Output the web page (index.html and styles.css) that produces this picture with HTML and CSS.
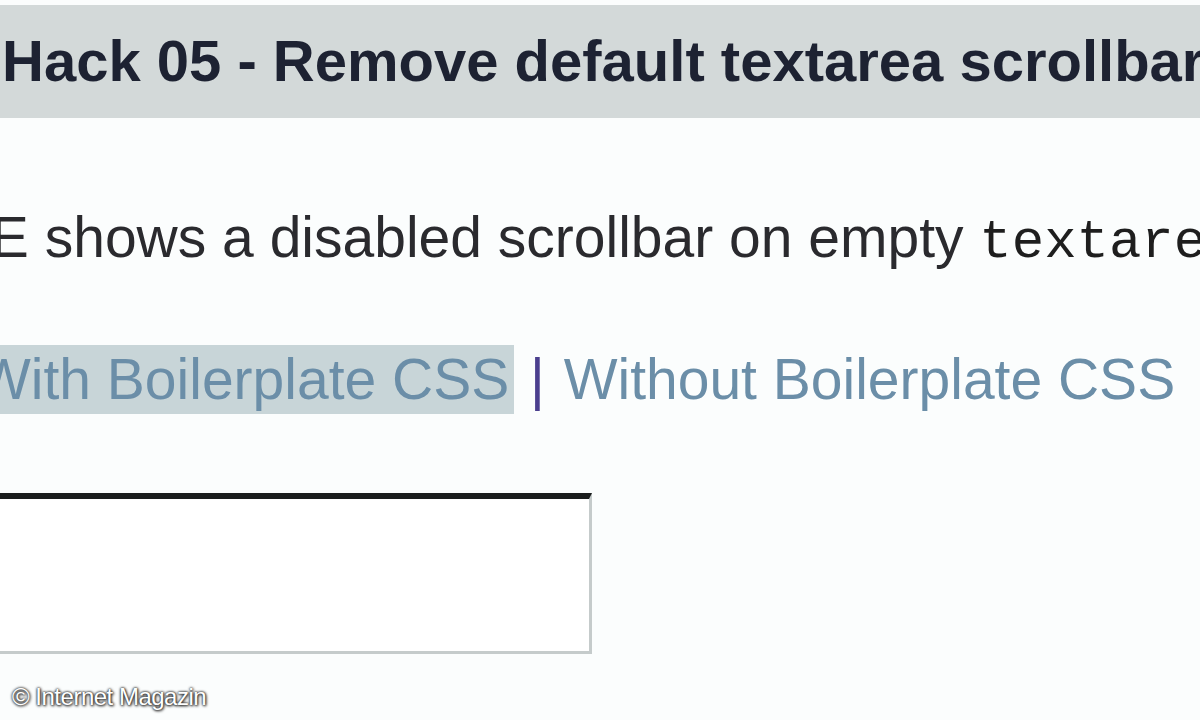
FILE: index.html
```html
<!DOCTYPE html>
<html lang="en">

<head>
    <meta charset="UTF-8">
    <title>Hack 05 - Remove default textarea scrollbar</title>
    <link rel="stylesheet" href="styles.css">
</head>

<body>
    <div class="page">
        <h2 class="hack-title">Hack 05 - Remove default textarea scrollbar</h2>

        <p class="intro">IE shows a disabled scrollbar on empty <code>textarea</code></p>

        <!-- Umschalter Boilerplate -->
        <p class="switch">
            <a href="#" class="active">With Boilerplate CSS</a>
            <span class="sep">|</span>
            <a href="#">Without Boilerplate CSS</a>
        </p>

        <textarea class="demo"></textarea>
    </div>

    <div class="credit">© Internet Magazin</div>
</body>

</html>
```

FILE: styles.css
```css
/* Allgemein */

body {
    margin: 0;
    background-color: #fbfdfd;
    font-family: 'Liberation Sans', Arial, sans-serif;
    overflow: hidden;
}

.page {
    width: 1200px;
    height: 720px;
    overflow: hidden;
}

.hack-title {
    margin: 5px 0 0;
    height: 113px;
    padding-left: 2px;
    line-height: 111px;
    font-size: 58px;
    font-weight: bold;
    color: #1d2232;
    background-color: #d3d9d9;
    white-space: nowrap;
}

.intro {
    margin: 86px 0 0;
    font-size: 57px;
    line-height: 66px;
    color: #2a2a2e;
    white-space: nowrap;
    text-indent: -25px;
}

.intro code {
    font-family: 'Liberation Mono', 'Courier New', monospace;
    font-size: 54px;
    line-height: 1;
    color: #1e1e1e;
}

.switch {
    margin: 76px 0 0;
    font-size: 57px;
    line-height: 66px;
    white-space: nowrap;
    text-indent: -23px;
}

.switch a {
    color: #6b8ea8;
    text-decoration: none;
}

.switch a.active {
    padding: 2px 5px 3px 0;
    background-color: #c8d5d8;
}

.sep {
    margin-right: 3px;
    color: #4b3f8e;
}

.demo {
    display: block;
    box-sizing: border-box;
    width: 612px;
    height: 161px;
    margin: 81px 0 0 -20px;
    border: 3px solid #c5cbcb;
    border-top: 6px solid #1a1d1d;
    background-color: #fff;
    resize: none;
    overflow: hidden;
}

/* Wasserzeichen */

.credit {
    position: absolute;
    left: 12px;
    top: 683px;
    font-size: 24px;
    color: #fff;
    text-shadow: 0 0 3px #222, 0 0 2px #444, 1px 1px 3px #333;
    letter-spacing: -0.5px;
}
```
